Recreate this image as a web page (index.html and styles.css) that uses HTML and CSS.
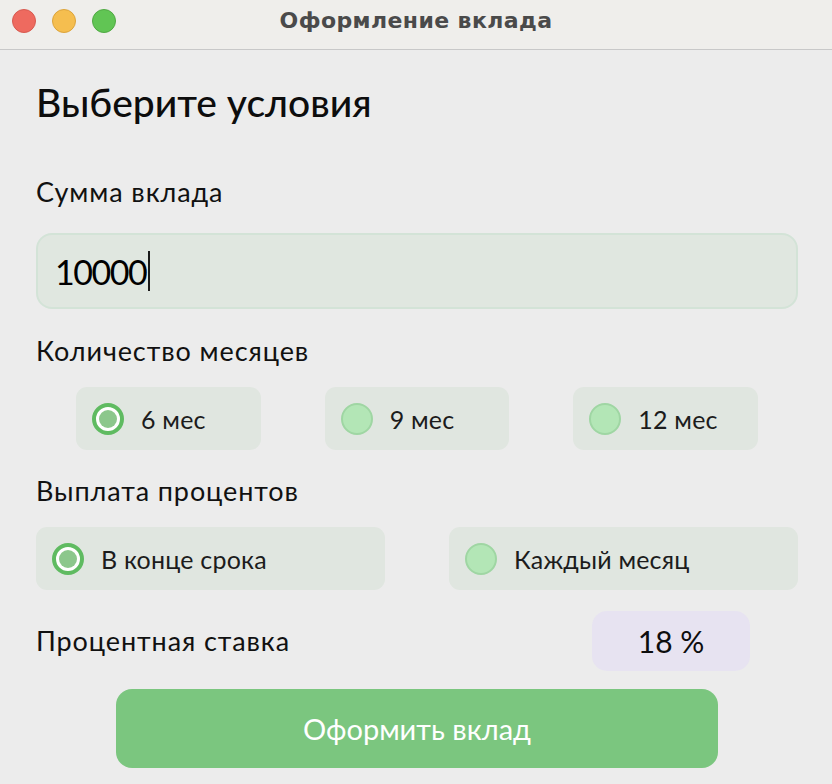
FILE: index.html
```html
<!DOCTYPE html>
<html lang="ru">
<head>
<meta charset="utf-8">
<title>Оформление вклада</title>
<link rel="stylesheet" href="styles.css">
</head>
<body>
<div class="window">
  <header class="titlebar">
    <div class="lights">
      <span class="light red"></span>
      <span class="light yellow"></span>
      <span class="light green"></span>
    </div>
    <div class="title">Оформление вклада</div>
  </header>
  <main class="content">
    <h1 class="heading">Выберите условия</h1>
    <div class="label label-sum">Сумма вклада</div>
    <div class="input"><span class="value">10000</span><span class="caret"></span></div>
    <div class="label label-months">Количество месяцев</div>
    <div class="months">
      <div class="option"><span class="radio checked"><span class="dot"></span></span><span class="opt-text">6 мес</span></div>
      <div class="option"><span class="radio"></span><span class="opt-text">9 мес</span></div>
      <div class="option"><span class="radio"></span><span class="opt-text">12 мес</span></div>
    </div>
    <div class="label label-pay">Выплата процентов</div>
    <div class="payout">
      <div class="option"><span class="radio checked"><span class="dot"></span></span><span class="opt-text">В конце срока</span></div>
      <div class="option"><span class="radio"></span><span class="opt-text">Каждый месяц</span></div>
    </div>
    <div class="rate-row">
      <div class="label">Процентная ставка</div>
      <div class="rate">18 %</div>
    </div>
    <button class="submit">Оформить вклад</button>
  </main>
</div>
</body>
</html>
```
FILE: styles.css
```css
html, body {
  margin: 0;
  padding: 0;
  background: #ececec;
}
body {
  width: 832px;
  height: 784px;
  overflow: hidden;
  font-family: "Lato", "Open Sans", sans-serif;
  color: #111;
}
.titlebar {
  position: relative;
  height: 50px;
  background: #efeeeb;
  border-bottom: 1px solid #c8c8c8;
  box-sizing: border-box;
}
.lights {
  display: flex;
  gap: 16px;
  padding: 9px 0 0 12px;
}
.light {
  width: 24px;
  height: 24px;
  border-radius: 50%;
  box-sizing: border-box;
}
.red { background: #ee6a5f; border: 1px solid #d75a50; }
.yellow { background: #f5be4f; border: 1px solid #dca43b; }
.green { background: #61c554; border: 1px solid #50a943; }
.title {
  position: absolute;
  left: 0;
  right: 0;
  top: 7px;
  text-align: center;
  font-family: "DejaVu Sans", "Liberation Sans", sans-serif;
  font-weight: bold;
  font-size: 22px;
  line-height: 28px;
  color: #4a4a4a;
  letter-spacing: 0.4px;
}
.content {
  padding: 28px 34px 0 36px;
  display: flex;
  flex-direction: column;
}
.heading {
  margin: 0;
  font-size: 39px;
  line-height: 48px;
  font-weight: 500;
  color: #0d0d0d;
}
.label {
  font-size: 27px;
  line-height: 32px;
  letter-spacing: 0.9px;
  color: #111;
}
.label-sum { margin-top: 50px; }
.input {
  margin-top: 25px;
  height: 76px;
  box-sizing: border-box;
  border: 2px solid #d3e3d7;
  border-radius: 16px;
  background: #e0e7e0;
  display: flex;
  align-items: center;
  padding-left: 17px;
}
.value {
  font-size: 34px;
  color: #000;
  letter-spacing: -1.5px;
}
.caret {
  width: 2px;
  height: 40px;
  background: #1a1a1a;
  margin-left: 2px;
}
.label-months { margin-top: 26px; }
.months {
  margin-top: 20px;
  padding: 0 40px;
  display: grid;
  grid-template-columns: repeat(3, 1fr);
  gap: 64px;
}
.option {
  height: 63px;
  border-radius: 11px;
  background: #e0e6e0;
  display: flex;
  align-items: center;
  padding-left: 16px;
}
.radio {
  width: 32px;
  height: 32px;
  border-radius: 50%;
  box-sizing: border-box;
  background: #b3e6b6;
  border: 2px solid #9fd6a3;
  flex: none;
  display: flex;
  align-items: center;
  justify-content: center;
}
.radio.checked {
  background: #ffffff;
  border: 4px solid #5fbb61;
}
.dot {
  width: 18px;
  height: 18px;
  border-radius: 50%;
  background: #8cc78c;
}
.opt-text {
  margin-left: 17px;
  font-size: 25px;
  letter-spacing: 0.2px;
  color: #1c1c1c;
}
.label-pay { margin-top: 25px; }
.payout {
  margin-top: 20px;
  display: grid;
  grid-template-columns: 1fr 1fr;
  gap: 64px;
}
.rate-row {
  margin-top: 21px;
  display: flex;
  align-items: center;
  justify-content: space-between;
}
.rate {
  width: 158px;
  height: 60px;
  margin-right: 48px;
  border-radius: 15px;
  background: #e7e3f1;
  display: flex;
  align-items: center;
  justify-content: center;
  font-size: 30px;
  color: #0d0d0d;
}
.submit {
  margin: 18px 80px 0 80px;
  height: 79px;
  border: none;
  border-radius: 16px;
  background: #7bc67f;
  color: #ffffff;
  font-family: "Lato", "Open Sans", sans-serif;
  font-size: 29px;
  padding: 0;
}
```
